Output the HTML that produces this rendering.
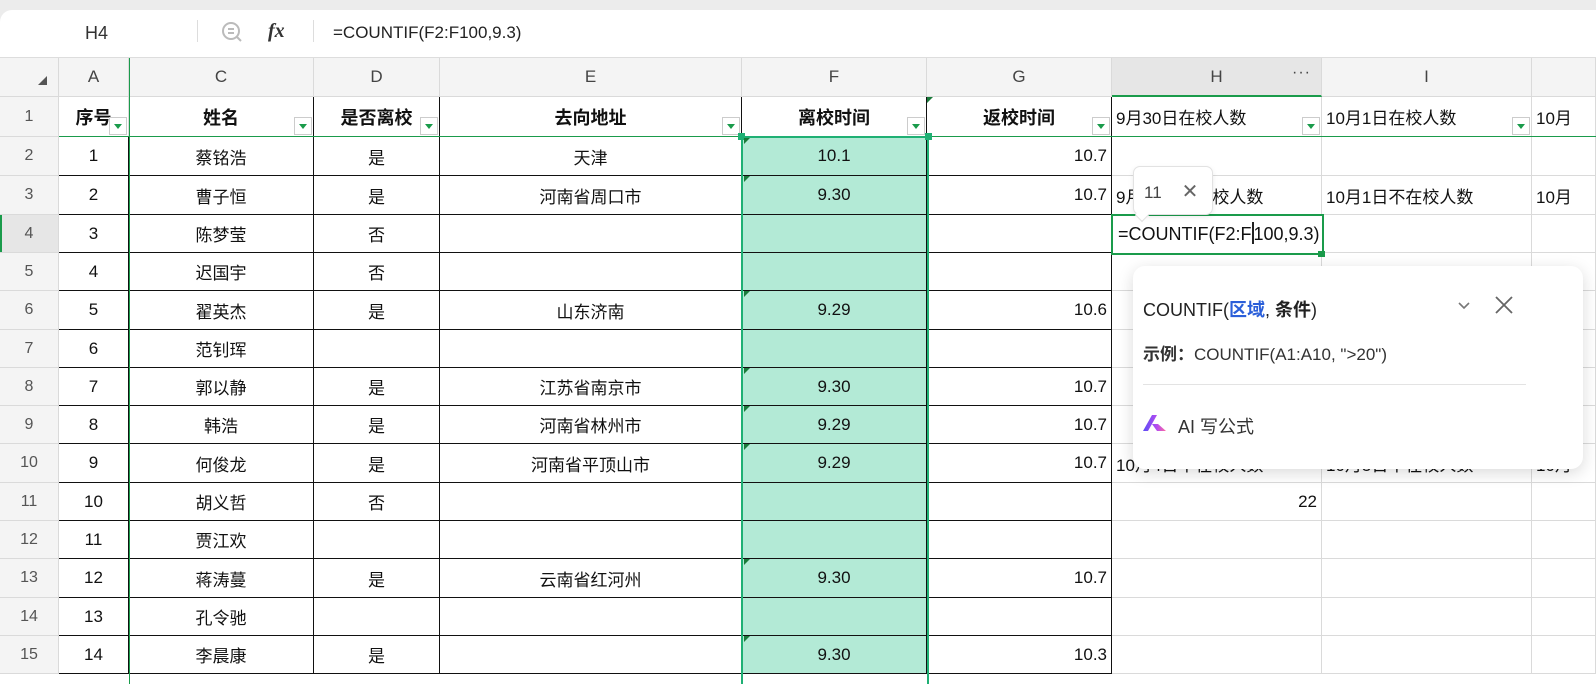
<!DOCTYPE html>
<html><head><meta charset="utf-8"><style>
*{margin:0;padding:0;box-sizing:border-box}
html,body{width:1596px;height:684px;overflow:hidden;margin:0}
body{background:#ececec;font-family:"Liberation Sans","Noto Sans CJK SC",sans-serif}
#root{position:relative;width:1596px;height:684px;overflow:hidden;background:#ececec}
#top{position:absolute;left:0;top:10px;width:1596px;height:48px;background:#fff;border-radius:12px 0 0 0;border-bottom:1px solid #ddd}
#grid{position:absolute;left:0;top:58px;background:#fff;width:1596px;height:626px;overflow:hidden}
table{border-collapse:separate;border-spacing:0;table-layout:fixed;width:1596px}
td{border-right:1px solid #dadada;border-bottom:1px solid #dadada;font-size:17px;color:#111;text-align:center;white-space:nowrap;overflow:hidden;position:relative;padding:0 4px}
tr.ch td{background:#f4f4f4;color:#444;font-size:17px;height:39px}
td.rh{background:#f4f4f4;color:#555;font-size:16px}
td.b{border-right-color:#111;border-bottom-color:#111}
td.f{background:#b3ead6}
td.r{text-align:right}
td.l{text-align:left}
tr.h1 td{font-weight:bold;font-size:18px;height:40px}
tr.h1 td.n{font-weight:normal;text-align:left;font-size:17px}
.dd{position:absolute;right:1px;bottom:1px;width:18px;height:18px;border:1px solid #ccc;background:#fff}
.dd:after{content:"";position:absolute;left:4px;top:6px;border-left:4px solid transparent;border-right:4px solid transparent;border-top:5px solid #1a9b4b}
.tri{position:absolute;left:1px;top:0;border-top:6px solid #1a7a3a;border-right:6px solid transparent}
.abs{position:absolute}
</style></head><body><div id="root">
<div id="top">
 <div class="abs" style="left:85px;top:13px;font-size:18px;color:#333">H4</div>
 <div class="abs" style="left:197px;top:10px;width:1px;height:22px;background:#ddd"></div>
 <svg class="abs" style="left:220px;top:10px" width="24" height="24" viewBox="0 0 24 24"><circle cx="11" cy="11" r="8" fill="none" stroke="#bbb" stroke-width="2"/><path d="M17 17l4 4M8 9h6M8 13h6" stroke="#bbb" stroke-width="2" fill="none"/></svg>
 <div class="abs" style="left:268px;top:10px;font-size:20px;font-weight:bold;font-style:italic;color:#333;font-family:'Liberation Serif',serif">fx</div>
 <div class="abs" style="left:313px;top:10px;width:1px;height:22px;background:#ddd"></div>
 <div class="abs" style="left:333px;top:13px;font-size:17px;color:#222">=COUNTIF(F2:F100,9.3)</div>
</div>
<div id="grid">
<table>
<colgroup><col style="width:59px"><col style="width:70px"><col style="width:185px"><col style="width:126px"><col style="width:302px"><col style="width:185px"><col style="width:185px"><col style="width:210px"><col style="width:210px"><col style="width:64px"></colgroup>
<tr class="ch"><td><span style="position:absolute;left:38px;top:18px;border-left:9px solid transparent;border-bottom:9px solid #555"></span></td><td>A</td><td>C</td><td>D</td><td>E</td><td>F</td><td>G</td><td style="background:#e6e6e6;border-bottom:2px solid #1a9b4b">H<span style="position:absolute;right:10px;top:6px;font-size:16px;letter-spacing:1px">···</span></td><td>I</td><td></td></tr>
<tr class="h1"><td class="rh" style="font-weight:normal;font-size:16px">1</td><td>序号<span class="dd"></span></td><td style="border-right-color:#111">姓名<span class="dd"></span></td><td style="border-right-color:#111">是否离校<span class="dd"></span></td><td style="border-right-color:#111">去向地址<span class="dd"></span></td><td style="border-right-color:#111">离校时间<span class="dd"></span></td><td style="border-right-color:#111"><span class="tri" style="left:0"></span>返校时间<span class="dd"></span></td><td class="n">9月30日在校人数<span class="dd"></span></td><td class="n">10月1日在校人数<span class="dd"></span></td><td class="n">10月</td></tr>
<tr style="height:39px"><td class="rh">2</td><td class="b">1</td><td class="b">蔡铭浩</td><td class="b">是</td><td class="b">天津</td><td class="b f">10.1</td><td class="b r">10.7</td><td></td><td></td><td></td></tr>
<tr style="height:39px"><td class="rh">3</td><td class="b">2</td><td class="b">曹子恒</td><td class="b">是</td><td class="b">河南省周口市</td><td class="b f">9.30</td><td class="b r">10.7</td><td class="l">9月30日不在校人数</td><td class="l">10月1日不在校人数</td><td class="l">10月</td></tr>
<tr style="height:38px"><td class="rh" style="background:#e6e6e6;box-shadow:inset 2px 0 #1a9b4b">4</td><td class="b">3</td><td class="b">陈梦莹</td><td class="b">否</td><td class="b"></td><td class="b f"></td><td class="b"></td><td></td><td></td><td></td></tr>
<tr style="height:38px"><td class="rh">5</td><td class="b">4</td><td class="b">迟国宇</td><td class="b">否</td><td class="b"></td><td class="b f"></td><td class="b"></td><td></td><td></td><td></td></tr>
<tr style="height:39px"><td class="rh">6</td><td class="b">5</td><td class="b">翟英杰</td><td class="b">是</td><td class="b">山东济南</td><td class="b f">9.29</td><td class="b r">10.6</td><td></td><td></td><td></td></tr>
<tr style="height:38px"><td class="rh">7</td><td class="b">6</td><td class="b">范钊珲</td><td class="b"></td><td class="b"></td><td class="b f"></td><td class="b"></td><td></td><td></td><td></td></tr>
<tr style="height:38px"><td class="rh">8</td><td class="b">7</td><td class="b">郭以静</td><td class="b">是</td><td class="b">江苏省南京市</td><td class="b f">9.30</td><td class="b r">10.7</td><td></td><td></td><td class="l">10月</td></tr>
<tr style="height:38px"><td class="rh">9</td><td class="b">8</td><td class="b">韩浩</td><td class="b">是</td><td class="b">河南省林州市</td><td class="b f">9.29</td><td class="b r">10.7</td><td></td><td></td><td></td></tr>
<tr style="height:39px"><td class="rh">10</td><td class="b">9</td><td class="b">何俊龙</td><td class="b">是</td><td class="b">河南省平顶山市</td><td class="b f">9.29</td><td class="b r">10.7</td><td class="l">10月4日不在校人数</td><td class="l">10月5日不在校人数</td><td class="l">10月</td></tr>
<tr style="height:38px"><td class="rh">11</td><td class="b">10</td><td class="b">胡义哲</td><td class="b">否</td><td class="b"></td><td class="b f"></td><td class="b"></td><td class="r">22</td><td></td><td></td></tr>
<tr style="height:38px"><td class="rh">12</td><td class="b">11</td><td class="b">贾江欢</td><td class="b"></td><td class="b"></td><td class="b f"></td><td class="b"></td><td></td><td></td><td></td></tr>
<tr style="height:39px"><td class="rh">13</td><td class="b">12</td><td class="b">蒋涛蔓</td><td class="b">是</td><td class="b">云南省红河州</td><td class="b f">9.30</td><td class="b r">10.7</td><td></td><td></td><td></td></tr>
<tr style="height:38px"><td class="rh">14</td><td class="b">13</td><td class="b">孔令驰</td><td class="b"></td><td class="b"></td><td class="b f"></td><td class="b"></td><td></td><td></td><td></td></tr>
<tr style="height:38px"><td class="rh">15</td><td class="b">14</td><td class="b">李晨康</td><td class="b">是</td><td class="b"></td><td class="b f">9.30</td><td class="b r">10.3</td><td></td><td></td><td></td></tr>
</table>
</div>
<div class="abs" style="left:129px;top:58px;width:1px;height:626px;background:#1a9b4b"></div>
<div class="abs" style="left:59px;top:136px;width:1537px;height:1px;background:#1a9b4b"></div>
<div class="abs" style="left:741px;top:136px;width:188px;height:548px;border:2px solid #1fb074;border-bottom:none"></div>
<div class="abs" style="left:738px;top:133px;width:7px;height:7px;background:#1fb074"></div>
<div class="abs" style="left:925px;top:133px;width:7px;height:7px;background:#1fb074"></div>
<div class="abs" style="left:744px;top:176px;border-top:6px solid #1a7a3a;border-right:6px solid transparent"></div>
<div class="abs" style="left:744px;top:291px;border-top:6px solid #1a7a3a;border-right:6px solid transparent"></div>
<div class="abs" style="left:744px;top:368px;border-top:6px solid #1a7a3a;border-right:6px solid transparent"></div>
<div class="abs" style="left:744px;top:406px;border-top:6px solid #1a7a3a;border-right:6px solid transparent"></div>
<div class="abs" style="left:744px;top:444px;border-top:6px solid #1a7a3a;border-right:6px solid transparent"></div>
<div class="abs" style="left:744px;top:559px;border-top:6px solid #1a7a3a;border-right:6px solid transparent"></div>
<div class="abs" style="left:744px;top:636px;border-top:6px solid #1a7a3a;border-right:6px solid transparent"></div>
<div class="abs" style="left:744px;top:138px;border-top:6px solid #1a7a3a;border-right:6px solid transparent"></div>
<div class="abs" style="left:1111px;top:214px;width:213px;height:41px;background:#fff;border:2px solid #1a9b4b;font-size:18px;color:#111;padding:6px 0 0 5px">=COUNTIF(F2:F<span style="display:inline-block;width:2px;height:22px;background:#222;vertical-align:-4px"></span>100,9.3)</div>
<div class="abs" style="left:1318px;top:251px;width:7px;height:6px;background:#1a9b4b"></div>
<div class="abs" style="left:1133px;top:166px;width:80px;height:49px;background:#fff;border:1px solid #e2e2e2;border-radius:7px;box-shadow:0 2px 6px rgba(0,0,0,.08);font-size:17px;color:#444;padding:12px 0 0 10px">11<span style="margin-left:20px;font-size:20px;color:#666">✕</span></div>
<div class="abs" style="left:1137px;top:210px;width:10px;height:10px;background:#fff;transform:rotate(45deg);border-right:1px solid #e2e2e2;border-bottom:1px solid #e2e2e2"></div>
<div class="abs" style="left:1133px;top:266px;width:450px;height:203px;background:#fff;border-radius:12px;box-shadow:0 4px 16px rgba(0,0,0,.15)">
 <div class="abs" style="left:10px;top:30px;font-size:18px;color:#222">COUNTIF(<b style="color:#2b5fd9">区域</b>, <b>条件</b>)</div>
 <svg class="abs" style="left:322px;top:30px" width="18" height="18" viewBox="0 0 18 18"><path d="M4 7l5 5 5-5" stroke="#777" stroke-width="1.6" fill="none"/></svg>
 <svg class="abs" style="left:360px;top:28px" width="22" height="22" viewBox="0 0 22 22"><path d="M3 3l16 16M19 3L3 19" stroke="#666" stroke-width="1.8"/></svg>
 <div class="abs" style="left:10px;top:74px;font-size:17px;color:#333"><b>示例：</b>COUNTIF(A1:A10, "&gt;20")</div>
 <div class="abs" style="left:10px;top:118px;width:383px;height:1px;background:#e3e3e3"></div>
 <svg class="abs" style="left:10px;top:148px" width="24" height="18" viewBox="0 0 24 18"><defs><linearGradient id="g" x1="0" x2="1"><stop offset="0" stop-color="#5a4cf5"/><stop offset="0.6" stop-color="#b44cf0"/><stop offset="1" stop-color="#ff6aa0"/></linearGradient></defs><path d="M0 17L9 1h5L5 17zM9 10h6l8 7h-9z" fill="url(#g)"/></svg>
 <div class="abs" style="left:45px;top:147px;font-size:18px;color:#333">AI 写公式</div>
</div>
</div></body></html>
